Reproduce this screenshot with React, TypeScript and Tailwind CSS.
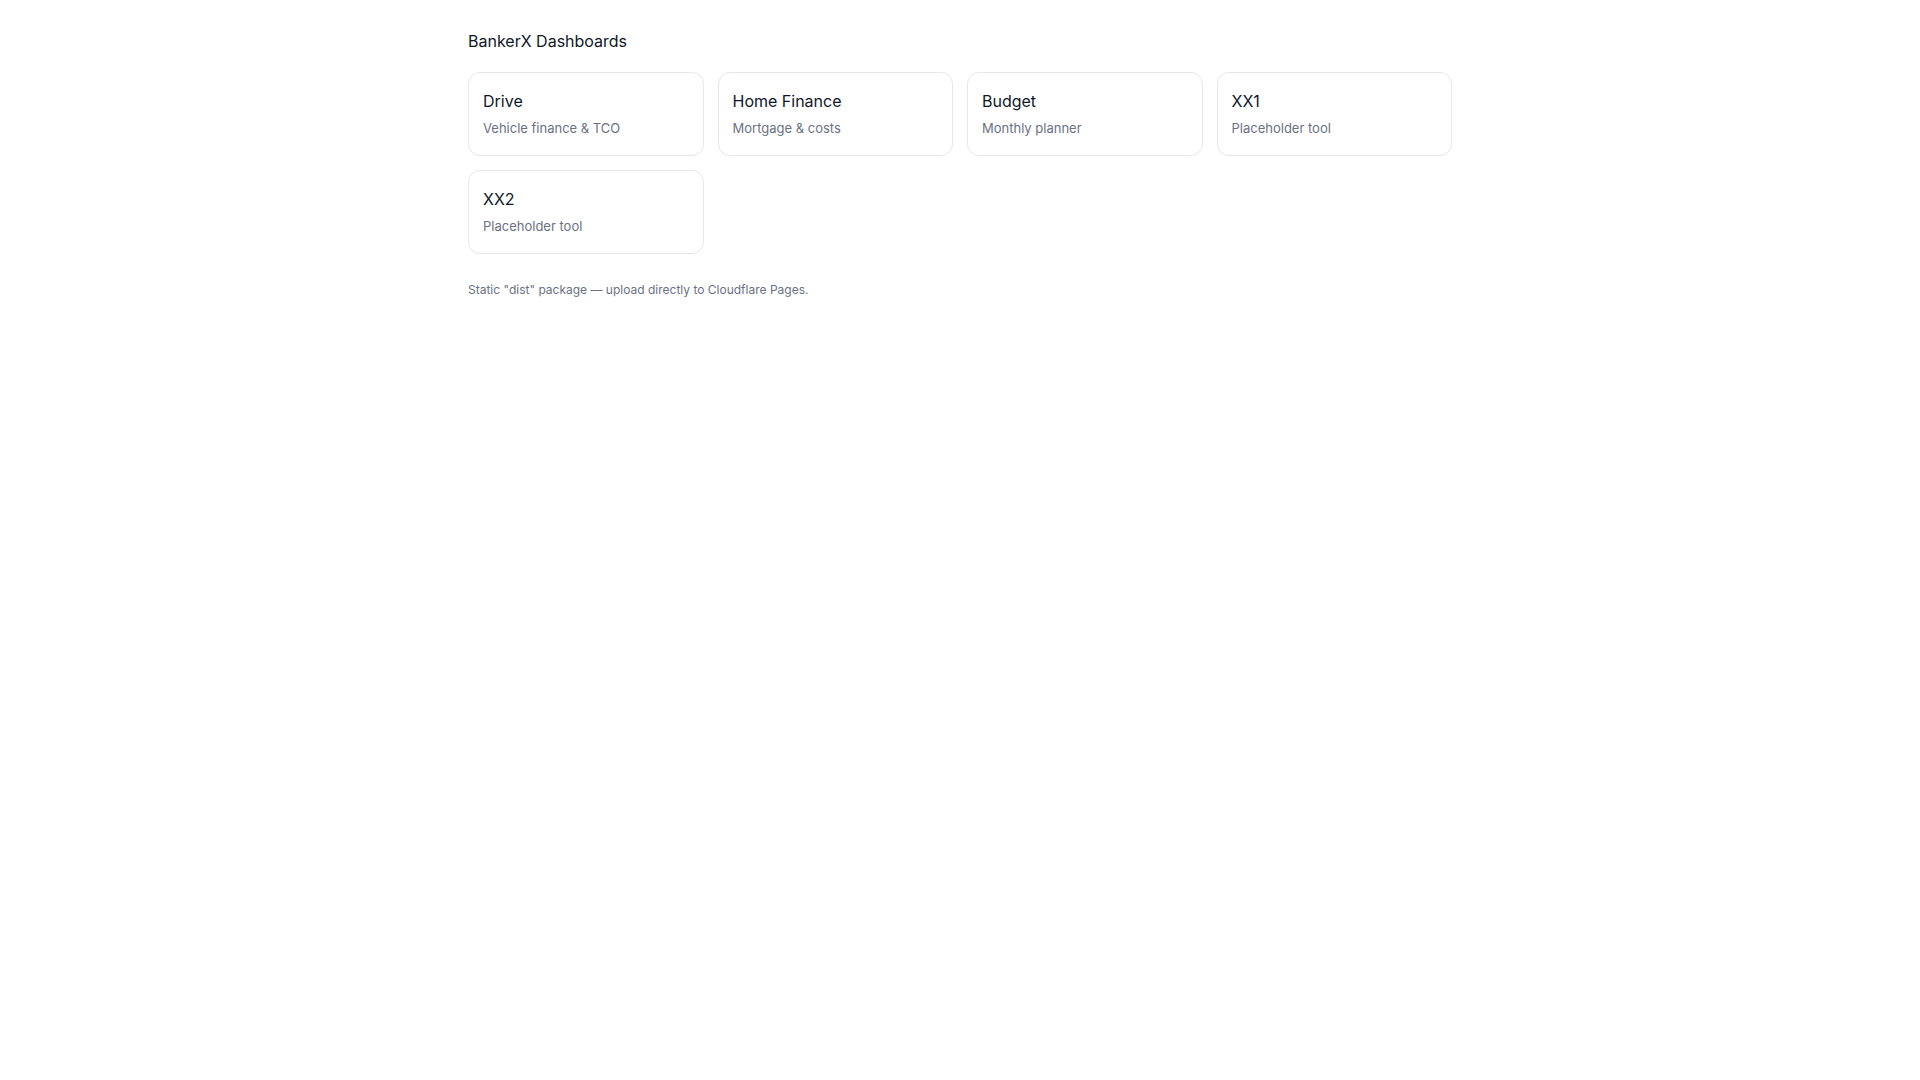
const dashboards = [
  { name: "Drive", description: "Vehicle finance & TCO" },
  { name: "Home Finance", description: "Mortgage & costs" },
  { name: "Budget", description: "Monthly planner" },
  { name: "XX1", description: "Placeholder tool" },
  { name: "XX2", description: "Placeholder tool" },
];

export default function App() {
  return (
    <div className="min-h-screen bg-white font-['Inter',sans-serif] text-gray-900 antialiased">
      <main className="mx-auto max-w-5xl px-5 pt-[29px]">
        <h1 className="mb-[19px] text-base font-normal leading-6 text-gray-900">BankerX Dashboards</h1>

        <div className="grid grid-cols-4 gap-3.5">
          {dashboards.map((dashboard) => (
            <a
              key={dashboard.name}
              href="#"
              className="block rounded-xl border border-gray-200 bg-white px-3.5 pt-4 pb-[17px] hover:border-gray-300"
            >
              <div className="text-base leading-6 text-gray-900">{dashboard.name}</div>
              <div className="mt-[5px] text-[13px] leading-5 text-gray-500">{dashboard.description}</div>
            </a>
          ))}
        </div>

        <p className="mt-7 text-xs leading-4 text-gray-500">
          Static "dist" package — upload directly to Cloudflare Pages.
        </p>
      </main>
    </div>
  );
}
